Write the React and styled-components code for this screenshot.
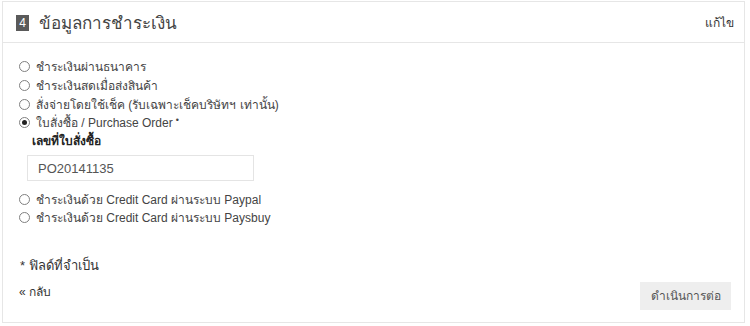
import React, { useState } from 'react';
import styled, { createGlobalStyle } from 'styled-components';

const GlobalStyle = createGlobalStyle`
  body {
    margin: 0;
    background: #ffffff;
    font-family: "Liberation Sans", "Noto Sans", "DejaVu Sans", sans-serif;
    color: #333333;
  }
`;

const Panel = styled.section`
  margin: 1px 5px 3px 2px;
  border: 1px solid #e6e6e6;
  background: #ffffff;
  height: 322px;
  box-sizing: border-box;
  display: flex;
  flex-direction: column;
`;

const Header = styled.header`
  flex-shrink: 0;
  height: 41px;
  box-sizing: border-box;
  border-bottom: 1px solid #e6e6e6;
  display: flex;
  align-items: center;
  padding: 0 10px 0 13px;
`;

const Step = styled.span`
  width: 13px;
  height: 16px;
  background: #5a5a5a;
  color: #ffffff;
  font-size: 12px;
  line-height: 16px;
  text-align: center;
  margin-right: 10px;
  margin-top: 1px;
`;

const Title = styled.h2`
  margin: 0;
  font-size: 17px;
  font-weight: normal;
  color: #444444;
  flex: 1;
`;

const EditLink = styled.a`
  font-size: 12px;
  color: #333333;
  text-decoration: none;
  cursor: pointer;
  margin-right: 0;
`;

const Body = styled.div`
  flex: 1;
  display: flex;
  flex-direction: column;
  padding: 14.7px 13px 0 16px;
`;

const OptionList = styled.ul`
  list-style: none;
  margin: 0;
  padding: 0;
`;

const Option = styled.li`
  display: flex;
  align-items: center;
  height: 18.6px;
  font-size: 12px;
  color: #444444;
`;

const Radio = styled.span`
  width: 9px;
  height: 9px;
  border: 1px solid #808080;
  border-radius: 50%;
  margin-right: 6px;
  display: flex;
  align-items: center;
  justify-content: center;
  flex-shrink: 0;

  &::after {
    content: '';
    width: 5px;
    height: 5px;
    border-radius: 50%;
    background: ${p => (p.checked ? '#222222' : 'transparent')};
  }
`;

const Required = styled.span`
  font-size: 9px;
  margin-left: 3px;
  align-self: flex-start;
  line-height: 14px;
`;

const PoField = styled.div`
  padding: 0 0 8.7px 13px;
`;

const PoLabel = styled.label`
  display: block;
  height: 18px;
  line-height: 18px;
  font-size: 12px;
  font-weight: bold;
  color: #222222;
  margin-bottom: 5px;
`;

const PoInput = styled.input`
  display: block;
  width: 227px;
  height: 26px;
  box-sizing: border-box;
  border: 1px solid #e4e4e4;
  padding: 0 10px;
  margin-left: -5px;
  font-family: inherit;
  font-size: 13px;
  color: #555555;
  outline: none;
`;

const Note = styled.p`
  margin: 30px 0 0 1px;
  font-size: 13px;
  line-height: 18px;
  color: #333333;
`;

const Footer = styled.div`
  display: flex;
  align-items: flex-start;
  justify-content: space-between;
  margin-top: 7px;
`;

const BackLink = styled.a`
  font-size: 12px;
  line-height: 18px;
  color: #333333;
  text-decoration: none;
  margin-top: 1px;
  cursor: pointer;
`;

const NextButton = styled.button`
  width: 91px;
  height: 28px;
  border: none;
  background: #eeeeee;
  color: #555555;
  font-family: inherit;
  font-size: 12px;
  cursor: pointer;
`;

const options = [
  { id: 'bank', label: 'ชำระเงินผ่านธนาคาร' },
  { id: 'cod', label: 'ชำระเงินสดเมื่อส่งสินค้า' },
  { id: 'cheque', label: 'สั่งจ่ายโดยใช้เช็ค (รับเฉพาะเช็คบริษัทฯ เท่านั้น)' },
  { id: 'po', label: 'ใบสั่งซื้อ / Purchase Order', required: true },
  { id: 'paypal', label: 'ชำระเงินด้วย Credit Card ผ่านระบบ Paypal' },
  { id: 'paysbuy', label: 'ชำระเงินด้วย Credit Card ผ่านระบบ Paysbuy' },
];

const App = () => {
  const [selected] = useState('po');

  return (
    <>
      <GlobalStyle />
      <Panel>
        <Header>
          <Step>4</Step>
          <Title>ข้อมูลการชำระเงิน</Title>
          <EditLink>แก้ไข</EditLink>
        </Header>

        <Body>
          <OptionList>
            {options.map(opt => (
              <React.Fragment key={opt.id}>
                <Option>
                  <Radio checked={selected === opt.id} />
                  {opt.label}
                  {opt.required && <Required>•</Required>}
                </Option>
                {opt.id === 'po' && selected === 'po' && (
                  <PoField>
                    <PoLabel>เลขที่ใบสั่งซื้อ</PoLabel>
                    <PoInput defaultValue="PO20141135" />
                  </PoField>
                )}
              </React.Fragment>
            ))}
          </OptionList>

          <Note>* ฟิลด์ที่จำเป็น</Note>

          <Footer>
            <BackLink>« กลับ</BackLink>
            <NextButton>ดำเนินการต่อ</NextButton>
          </Footer>
        </Body>
      </Panel>
    </>
  );
};

export default App;
